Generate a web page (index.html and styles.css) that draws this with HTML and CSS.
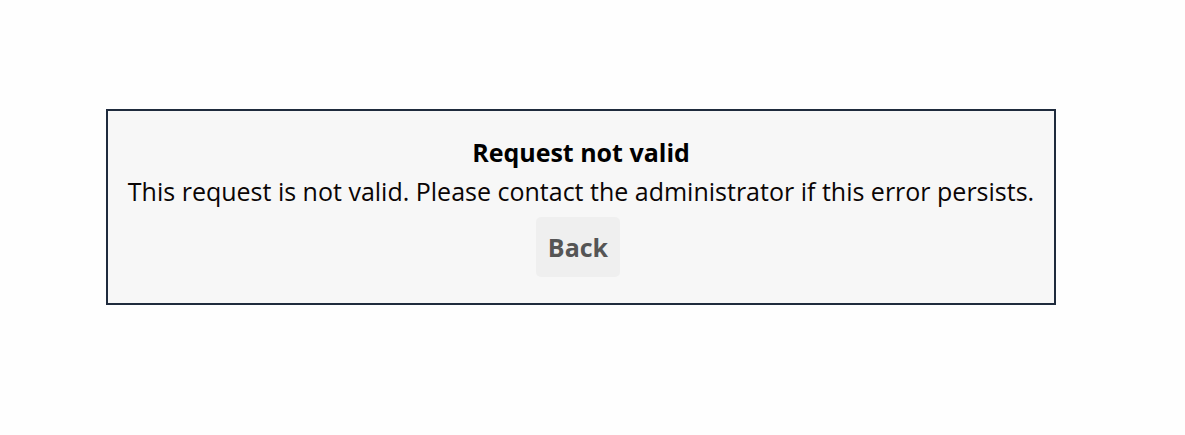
FILE: index.html
```html
<!DOCTYPE html>
<html>
<head>
<meta charset="utf-8">
<link rel="stylesheet" href="styles.css">
</head>
<body>
<div class="page">
  <div class="error-box">
    <h1 class="title">Request not valid</h1>
    <p class="message">This request is not valid. Please contact the administrator if this error persists.</p>
    <button class="back">Back</button>
  </div>
</div>
</body>
</html>
```
FILE: styles.css
```css
html, body {
  margin: 0;
  padding: 0;
  background: #fefefe;
}
.page {
  padding: 109px 0 0 106px;
  font-family: "Open Sans", sans-serif;
}
.error-box {
  width: 946px;
  height: 192px;
  box-sizing: content-box;
  border: 2px solid #1f2b3d;
  background: #f7f7f7;
  display: flex;
  flex-direction: column;
  align-items: center;
  padding: 0;
}
.title {
  margin: 24px 0 0;
  font-size: 25px;
  font-weight: 700;
  line-height: 34px;
  color: #000;
}
.message {
  margin: 5px 0 0;
  font-size: 25px;
  line-height: 34px;
  color: #0a0505;
}
.back {
  margin: 9px 6px 0 0;
  width: 84px;
  height: 60px;
  border: none;
  border-radius: 5px;
  background: #efefef;
  color: #555;
  font-family: "Open Sans", sans-serif;
  font-weight: 700;
  font-size: 25px;
  padding: 0;
}
```
